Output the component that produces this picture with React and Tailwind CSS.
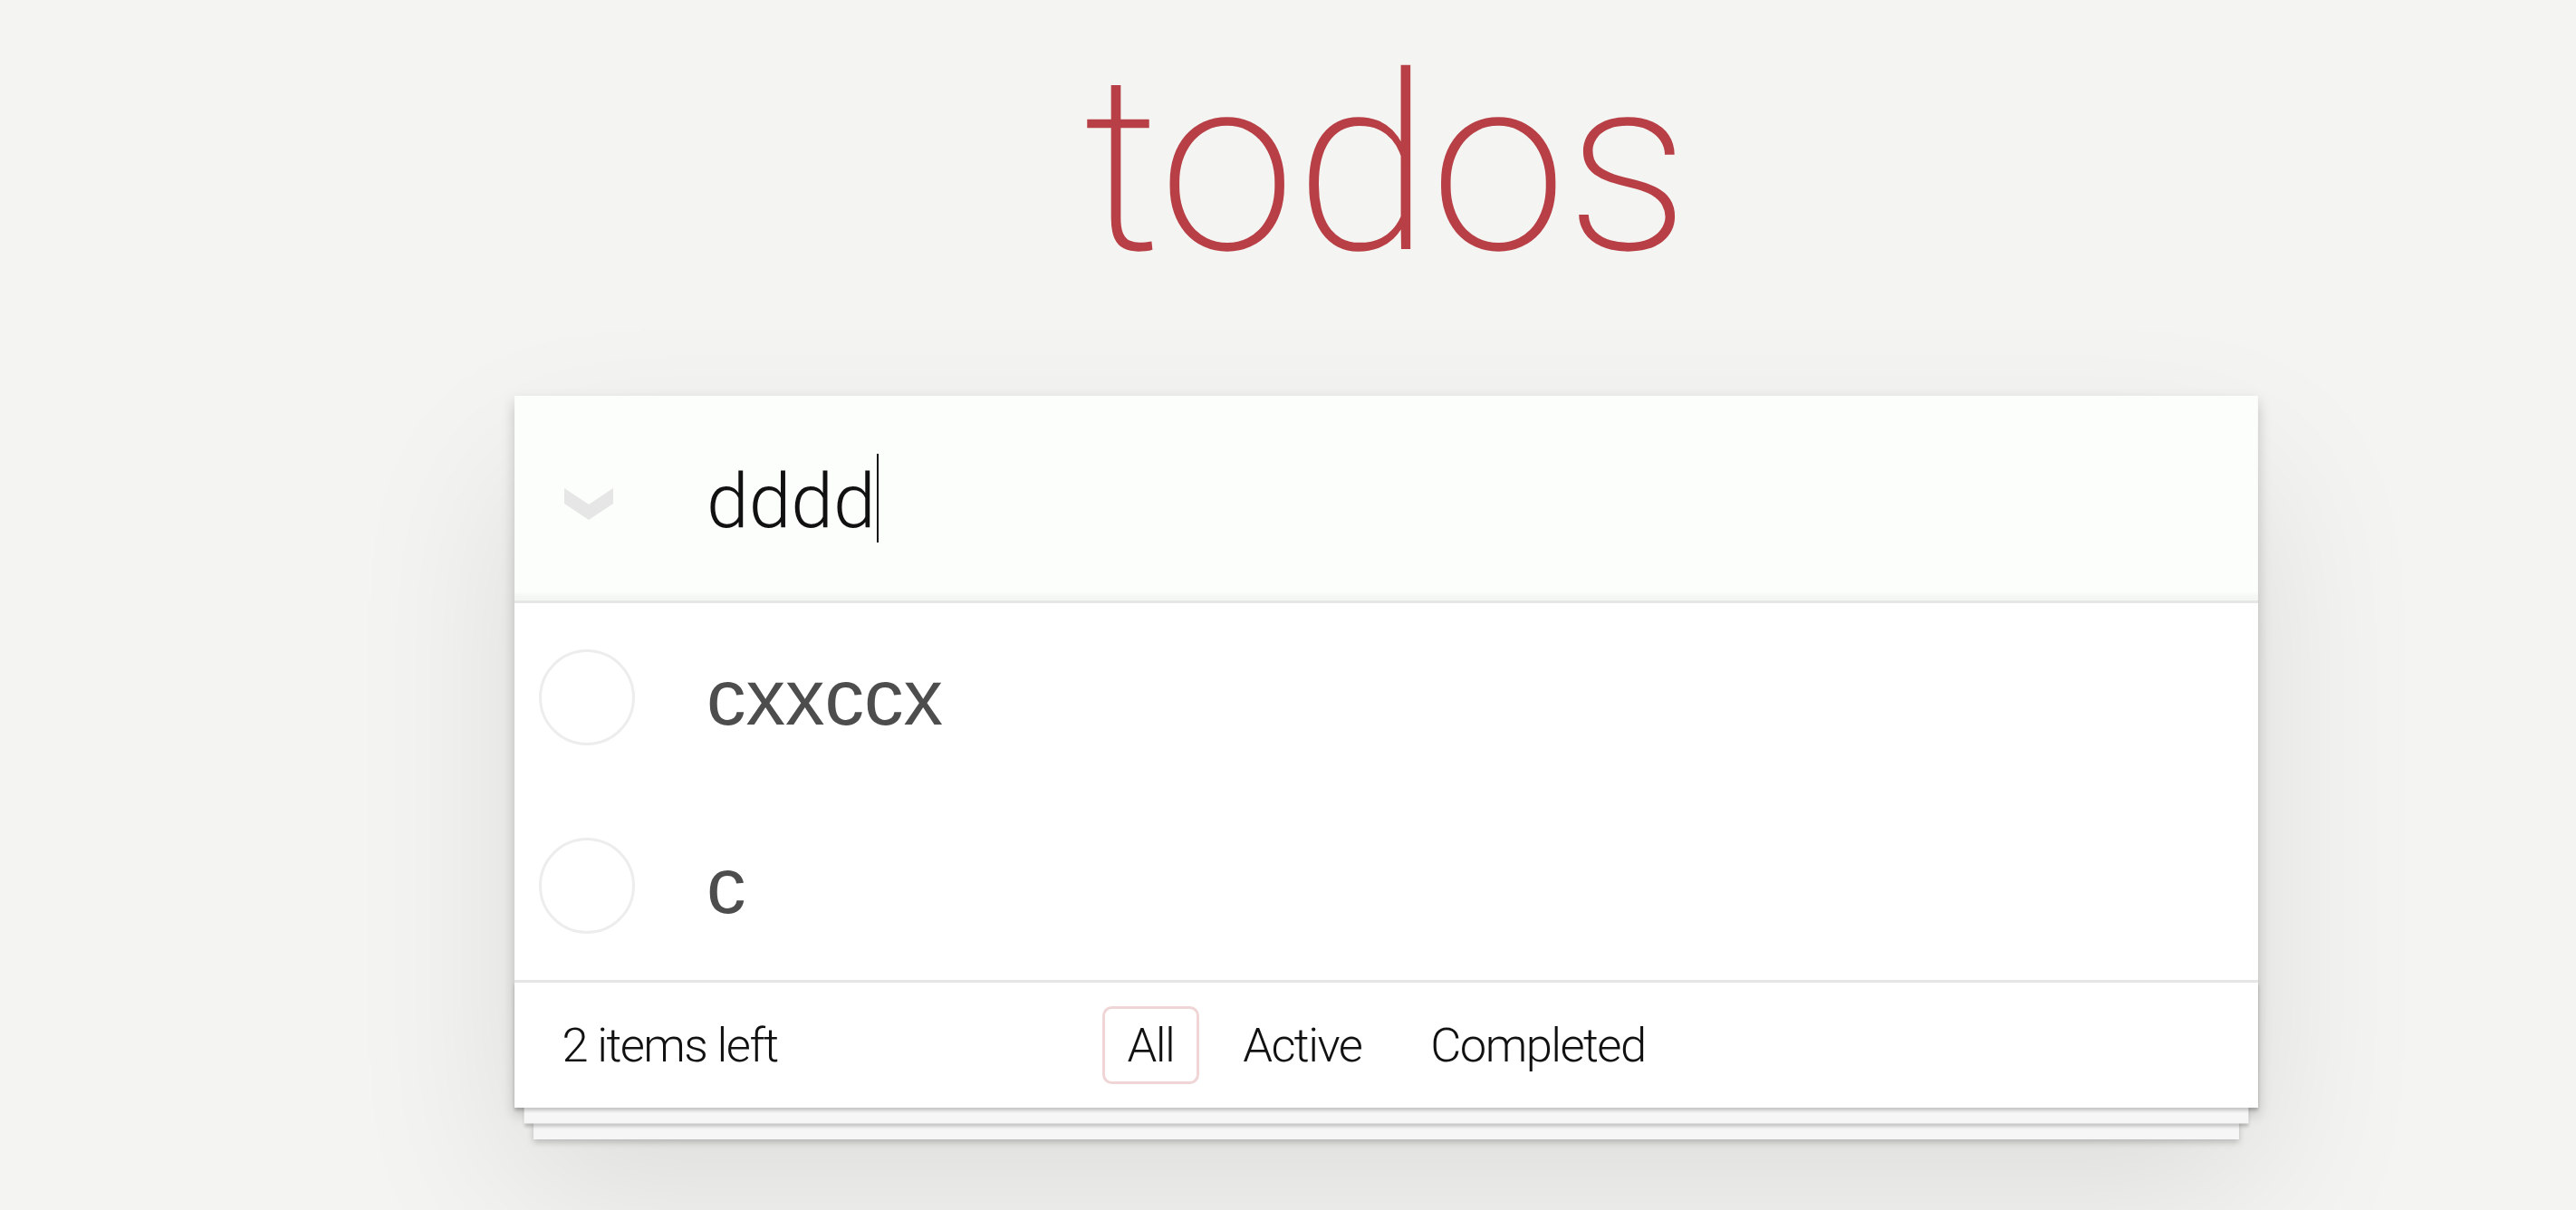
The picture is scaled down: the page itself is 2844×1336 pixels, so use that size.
import React from 'react';

function Chevron() {
  return (
    <svg width="54" height="35" viewBox="0 0 54 35" className="mt-[13px] ml-[55px] shrink-0">
      <polygon points="0,0 27,18 54,0 54,17 27,35 0,17" fill="#e6e6e6" />
    </svg>
  );
}

function TodoItem({ title }) {
  return (
    <li className="flex items-center h-[208px]">
      <div className="ml-[27px] w-[106px] h-[106px] rounded-full border-[3px] border-[#ededed] shrink-0" />
      <span className="ml-[79px] font-['Liberation_Sans',Arial,sans-serif] text-[87px] text-[#4d4d4d]">
        {title}
      </span>
    </li>
  );
}

export default function App() {
  const todos = ['cxxccx', 'c'];
  const filters = ['All', 'Active', 'Completed'];

  return (
    <div className="min-h-screen bg-[#f4f4f2] font-['Roboto','Helvetica_Neue',Arial,sans-serif] text-[#111]">
      <div className="ml-[568px] w-[1925px] pt-[47px]">
        {/* title */}
        <h1 className="text-center text-[271px] leading-[271px] font-extralight text-[#b83f45]">todos</h1>

        <section className="mt-[119px] bg-white shadow-[0_7px_14px_0_rgba(0,0,0,0.2),0_87px_175px_0_rgba(0,0,0,0.1)]">
          {/* new todo */}
          <header className="flex items-center h-[226px] bg-[#fcfefb] shadow-[inset_0_-7px_3.5px_rgba(0,0,0,0.03)]">
            <Chevron />
            <div className="ml-[103px] flex items-center">
              <span className="mt-[8px] text-[84px] leading-[98px] font-light text-[#111]">dddd</span>
              <span className="ml-[1px] w-[2.5px] h-[98px] bg-[#111]" />
            </div>
          </header>

          {/* list */}
          <ul className="border-t-[3.5px] border-[#e6e6e6]">
            {todos.map((t) => (
              <TodoItem key={t} title={t} />
            ))}
          </ul>

          {/* footer */}
          <footer className="relative grid grid-cols-[1fr_auto_1fr] items-center h-[141px] px-[52.5px] border-t-[3.5px] border-[#e6e6e6] text-[52.5px] tracking-[-0.03em] font-light">
            <span>2 items left</span>
            <ul className="flex">
              {filters.map((f) => (
                <li key={f}>
                  <a
                    className={
                      'block m-[10.5px] px-[24.5px] py-[10.5px] leading-[59px] rounded-[10.5px] border-[3.5px] ' +
                      (f === 'All' ? 'border-[rgba(175,47,47,0.2)]' : 'border-transparent')
                    }
                  >
                    {f}
                  </a>
                </li>
              ))}
            </ul>
            <span />
            <div className="absolute inset-x-0 bottom-0 h-[140px] pointer-events-none shadow-[0_3.5px_3.5px_rgba(0,0,0,0.2),0_28px_0_-10.5px_#f6f6f6,0_31.5px_3.5px_-10.5px_rgba(0,0,0,0.2),0_56px_0_-21px_#f6f6f6,0_59.5px_7px_-21px_rgba(0,0,0,0.2)]" />
          </footer>
        </section>
      </div>
    </div>
  );
}
